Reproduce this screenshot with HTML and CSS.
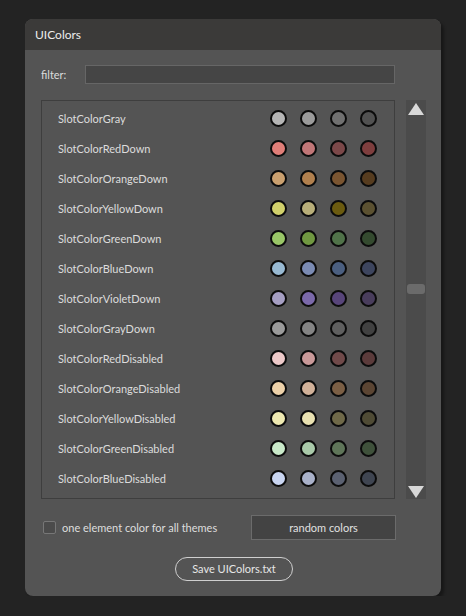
FILE: index.html
```
<!DOCTYPE html>
<html>
<head>
<meta charset="utf-8">
<link rel="stylesheet" href="styles.css">
</head>
<body>
<div class="window">
  <div class="titlebar">UIColors</div>
  <div class="content">
    <div class="filter-row">
      <span class="filter-label">filter:</span>
      <div class="filter-input"></div>
    </div>
    <div class="main-row">
      <div class="list">
        <div class="row"><span class="name">SlotColorGray</span><span class="dots"><i class="dot" style="background:#b5b5b5"></i><i class="dot" style="background:#9b9b9b"></i><i class="dot" style="background:#707070"></i><i class="dot" style="background:#515151"></i></span></div>
        <div class="row"><span class="name">SlotColorRedDown</span><span class="dots"><i class="dot" style="background:#e07e78"></i><i class="dot" style="background:#c07677"></i><i class="dot" style="background:#7b4849"></i><i class="dot" style="background:#7e3e3e"></i></span></div>
        <div class="row"><span class="name">SlotColorOrangeDown</span><span class="dots"><i class="dot" style="background:#caa06f"></i><i class="dot" style="background:#b1804e"></i><i class="dot" style="background:#7a5531"></i><i class="dot" style="background:#563c1f"></i></span></div>
        <div class="row"><span class="name">SlotColorYellowDown</span><span class="dots"><i class="dot" style="background:#d1d06b"></i><i class="dot" style="background:#b8ae79"></i><i class="dot" style="background:#6b5b10"></i><i class="dot" style="background:#5b5131"></i></span></div>
        <div class="row"><span class="name">SlotColorGreenDown</span><span class="dots"><i class="dot" style="background:#99c667"></i><i class="dot" style="background:#709841"></i><i class="dot" style="background:#507249"></i><i class="dot" style="background:#344a2f"></i></span></div>
        <div class="row"><span class="name">SlotColorBlueDown</span><span class="dots"><i class="dot" style="background:#98b9d2"></i><i class="dot" style="background:#7b8bb3"></i><i class="dot" style="background:#4b5f80"></i><i class="dot" style="background:#3d455e"></i></span></div>
        <div class="row"><span class="name">SlotColorVioletDown</span><span class="dots"><i class="dot" style="background:#a59ec2"></i><i class="dot" style="background:#7b69aa"></i><i class="dot" style="background:#58457a"></i><i class="dot" style="background:#493d5c"></i></span></div>
        <div class="row"><span class="name">SlotColorGrayDown</span><span class="dots"><i class="dot" style="background:#9a9a9a"></i><i class="dot" style="background:#848484"></i><i class="dot" style="background:#5f5f5f"></i><i class="dot" style="background:#414141"></i></span></div>
        <div class="row"><span class="name">SlotColorRedDisabled</span><span class="dots"><i class="dot" style="background:#edc9c9"></i><i class="dot" style="background:#c99999"></i><i class="dot" style="background:#704a4a"></i><i class="dot" style="background:#5b3b3b"></i></span></div>
        <div class="row"><span class="name">SlotColorOrangeDisabled</span><span class="dots"><i class="dot" style="background:#edd1a9"></i><i class="dot" style="background:#d1b199"></i><i class="dot" style="background:#7b5f45"></i><i class="dot" style="background:#5b4533"></i></span></div>
        <div class="row"><span class="name">SlotColorYellowDisabled</span><span class="dots"><i class="dot" style="background:#eee9b1"></i><i class="dot" style="background:#e9e1b1"></i><i class="dot" style="background:#6f6949"></i><i class="dot" style="background:#4f4b35"></i></span></div>
        <div class="row"><span class="name">SlotColorGreenDisabled</span><span class="dots"><i class="dot" style="background:#c9e9c9"></i><i class="dot" style="background:#a9c9a9"></i><i class="dot" style="background:#5f7559"></i><i class="dot" style="background:#3f513b"></i></span></div>
        <div class="row"><span class="name">SlotColorBlueDisabled</span><span class="dots"><i class="dot" style="background:#c9d5f1"></i><i class="dot" style="background:#a9b1c9"></i><i class="dot" style="background:#5b6171"></i><i class="dot" style="background:#3f4551"></i></span></div>
      </div>
      <div class="scrollbar">
        <div class="arrow up"></div>
        <div class="track"><div class="thumb"></div></div>
        <div class="arrow down"></div>
      </div>
    </div>
    <div class="options-row">
      <label class="check"><span class="box"></span><span>one element color for all themes</span></label>
      <div class="btn-random">random colors</div>
    </div>
    <div class="save-row">
      <div class="btn-save">Save UIColors.txt</div>
    </div>
  </div>
</div>
</body>
</html>
```
FILE: styles.css
```
html, body {
  margin: 0;
  padding: 0;
  background: #232323;
}
body {
  font-family: "Lato", "DejaVu Sans", sans-serif;
  font-size: 11px;
  color: #dedede;
  padding: 19px 0 0 25px;
}
.window {
  width: 416px;
  height: 577px;
  background: #545454;
  border-radius: 8px;
  overflow: hidden;
  box-shadow: 3px 3px 3px rgba(0,0,0,0.35);
  display: flex;
  flex-direction: column;
}
.titlebar {
  height: 31px;
  background: #3b3a39;
  color: #ececec;
  font-size: 12px;
  line-height: 32px;
  padding-left: 10px;
  flex: none;
}
.content {
  padding: 15px 15px 0 16px;
  display: flex;
  flex-direction: column;
}
.filter-row {
  display: flex;
  align-items: center;
  height: 19px;
}
.filter-label {
  width: 44px;
  color: #dcdcdc;
}
.filter-input {
  width: 308px;
  height: 17px;
  background: #454545;
  border: 1px solid #666;
}
.main-row {
  display: flex;
  margin-top: 16px;
  gap: 11px;
}
.list {
  box-sizing: border-box;
  height: 399px;
  width: 354px;
  border: 1px solid #3e3e3e;
  padding-top: 2px;
}
.row {
  height: 30px;
  display: flex;
  align-items: center;
  justify-content: space-between;
  padding-left: 16px;
}
.name {
  color: #dcdcdc;
}
.dots {
  display: flex;
  gap: 13px;
  margin-right: 17px;
}
.dot {
  display: block;
  width: 13px;
  height: 13px;
  border: 2px solid #0b0b0b;
  border-radius: 50%;
}
.scrollbar {
  width: 20px;
  height: 399px;
  background: #4b4b4b;
  display: flex;
  flex-direction: column;
  align-items: center;
}
.arrow {
  width: 0;
  height: 0;
  border-left: 8px solid transparent;
  border-right: 8px solid transparent;
  flex: none;
}
.arrow.up {
  margin-top: 3px;
  border-bottom: 12px solid #d8d8d8;
}
.arrow.down {
  margin-bottom: 1px;
  border-top: 12px solid #d8d8d8;
}
.track {
  flex: 1;
  width: 100%;
  position: relative;
}
.thumb {
  position: absolute;
  left: 1px;
  right: 1px;
  top: 169px;
  height: 10px;
  background: #6b6b6b;
  border-radius: 3px;
}
.options-row {
  display: flex;
  align-items: center;
  margin-top: 16px;
  height: 25px;
}
.check {
  display: flex;
  align-items: center;
  gap: 6px;
  width: 208px;
  padding-left: 2px;
}
.box {
  width: 11px;
  height: 11px;
  border: 1px solid #777;
  border-radius: 2px;
  background: #4b4b4b;
}
.btn-random {
  width: 143px;
  height: 23px;
  line-height: 23px;
  background: #434343;
  border: 1px solid #6b6b6b;
  text-align: center;
  color: #e0e0e0;
}
.save-row {
  display: flex;
  margin-top: 17px;
  padding-left: 134px;
}
.btn-save {
  width: 116px;
  height: 22px;
  line-height: 22px;
  border: 1px solid #cfcfcf;
  border-radius: 12px;
  text-align: center;
  color: #e6e6e6;
}
```
